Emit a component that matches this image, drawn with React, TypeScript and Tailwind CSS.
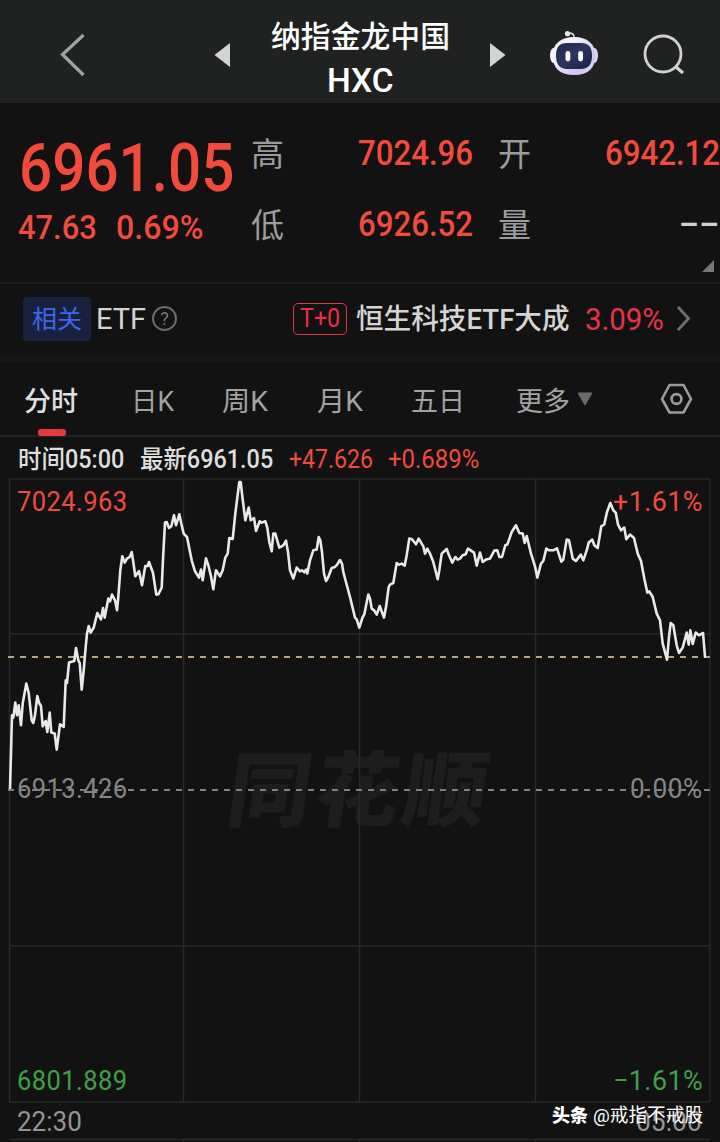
import { useLayoutEffect, useRef, useState, type ReactNode } from "react";

/** Single-line text condensed or widened to fill the width given by its classes. */
function Fit({ className = "", children }: { className?: string; children: ReactNode }) {
  const box = useRef<HTMLSpanElement>(null);
  const text = useRef<HTMLSpanElement>(null);
  const [scale, setScale] = useState(1);
  useLayoutEffect(() => {
    if (box.current && text.current) {
      setScale(box.current.offsetWidth / text.current.offsetWidth);
    }
  }, []);
  return (
    <span ref={box} className={`block shrink-0 whitespace-nowrap ${className}`}>
      <span ref={text} className="inline-block origin-left" style={{ transform: `scaleX(${scale})` }}>
        {children}
      </span>
    </span>
  );
}

// Intraday curve, in chart units (three units per pixel), grouped by horizontal origin.
const segments: { origin: number; points: number[][] }[] = [
  {
    origin: 0,
    points: [
      [30,958],[36,735],[40,742],[46,697],[51,735],[56,705],[63,765],[68,700],[79,640],[86,668],[95,750],[100,758],
      [105,735],[112,677],[117,697],[123,707],[128,768],[137,752],[142,785],[149,727],[154,787],[164,790],[170,838],
      [176,792],[180,762],[191,770],[197,630],[201,638],[207,577],[223,572],[228,533],[235,570],[239,578],[245,658],
      [251,600],[257,530],[261,490],[266,467],[272,487],[281,472],[292,428],[303,447],[309,413],[314,442],[325,385],
      [330,393],[336,373],[345,390],[351,420],[355,380],[361,300],[367,258],[374,277],[381,265],[389,260],[395,245],
      [400,275],[406,318],[417,302],[426,345],[436,287],[443,287],[447,275],[459,308],[469,373],[475,372],[485,352],
      [490,250],[495,157],[500,155],[507,173],[514,168],[522,135],[528,165],[538,132],[544,160],[551,190],[561,200],
      [575,270],[585,303],[597,322],[603,298],[608,330],[618,264],[625,285],[633,318],[640,357],[648,300],[660,318],
      [668,300],[676,262],[683,250],[688,203],[698,206],[706,130],
    ],
  },
  {
    origin: 660,
    points: [
      [58,35],[62,35],[66,70],[76,150],[86,112],[92,150],[102,143],[108,182],[119,153],[125,157],[136,153],[142,172],
      [148,215],[155,243],[160,190],[166,190],[178,232],[190,225],[198,211],[204,245],[210,300],[220,325],[230,292],
      [240,303],[246,300],[253,306],[258,298],[262,310],[270,270],[280,240],[290,238],[296,200],[301,210],[306,245],
      [312,310],[318,332],[325,320],[335,293],[345,290],[352,282],[360,269],[366,280],[370,305],[390,380],[405,442],
      [410,447],[418,472],[428,440],[433,432],[445,373],[450,385],[455,415],[462,420],[470,433],[479,407],[492,442],
      [498,410],[506,350],[510,343],[520,338],[530,278],[537,283],[545,280],[554,286],[560,255],[568,205],[576,207],
      [588,222],[596,205],[610,228],[615,250],[622,235],[630,250],[640,275],[653,327],[658,300],[665,250],[673,243],
      [680,236],[687,255],[697,277],[706,260],[713,268],
    ],
  },
  {
    origin: 1380,
    points: [
      [0,265],[8,255],[17,252],[24,235],[42,247],[50,286],[60,247],[68,275],[78,268],[90,265],[103,241],[112,240],
      [118,260],[126,260],[136,225],[142,223],[155,185],[168,165],[178,188],[188,190],[194,218],[200,197],[213,250],
      [225,288],[232,322],[243,280],[250,272],[259,235],[267,240],[280,240],[291,234],[304,274],[310,268],[320,208],
      [327,210],[338,265],[348,272],[362,253],[370,270],[380,240],[386,217],[397,208],[403,225],[413,233],[424,168],
      [433,162],[441,125],[451,98],[460,120],[467,127],[474,163],[483,180],[493,172],[499,207],[510,193],[522,203],
      [533,250],[543,272],[553,325],[562,367],[568,363],[578,380],[590,430],[600,450],[608,520],[621,568],[627,500],
      [632,458],[640,465],[650,525],[657,548],[668,532],[680,487],[686,523],[691,480],[698,521],[707,487],[717,495],
      [729,488],[735,559],
    ],
  },
];

const curve = segments
  .flatMap((s) => s.points.map(([x, y]) => `${((x + s.origin) / 3).toFixed(1)},${(y / 3 - 7.7).toFixed(1)}`))
  .join(" ");

function Robot() {
  return (
    <svg width="50" height="46" viewBox="0 0 50 46">
      <defs>
        <linearGradient id="shell" x1="0" y1="0" x2="1" y2="1">
          <stop offset="0.3" stopColor="#f4f3fa" />
          <stop offset="0.75" stopColor="#cfc5f4" />
          <stop offset="1" stopColor="#e9e5fb" />
        </linearGradient>
        <linearGradient id="visor" x1="0" y1="0" x2="1" y2="1">
          <stop offset="0" stopColor="#20294f" />
          <stop offset="0.5" stopColor="#2d355c" />
          <stop offset="1" stopColor="#192046" />
        </linearGradient>
      </defs>
      <path d="M19 3.300c4-.8 6.500 1 6.200 5" fill="none" stroke="#d9dcdc" strokeWidth="1.600" />
      <circle cx="18.500" cy="3.700" r="2.600" fill="#e3e6e5" />
      <ellipse cx="4.500" cy="25.500" rx="3.500" ry="7.500" fill="#f1f1f7" />
      <ellipse cx="45.500" cy="25.500" rx="3.500" ry="7.500" fill="#ded7f8" />
      <path d="M25 7C38 7 46.500 14 46.500 25.500 46.500 38 39 45 25 45S3.500 38 3.500 25.500C3.500 14 12 7 25 7Z" fill="url(#shell)" />
      <path d="M18 13h14c7.500 0 11 4 11 12.500S39.500 39 32 39H18C10.500 39 7 34 7 25.500S10.500 13 18 13Z" fill="url(#visor)" />
      <rect x="16.500" y="21" width="4.800" height="10.500" rx="2.400" fill="#fff" />
      <rect x="29.200" y="21" width="4.800" height="10.500" rx="2.400" fill="#fff" />
    </svg>
  );
}

function Header() {
  return (
    <header className="flex h-[103px] bg-[#202221] text-white">
      <svg width="200" height="103" fill="none" className="shrink-0">
        <path d="M83.500 35 62.500 54.500l21 20.500" stroke="#a0a1a1" strokeWidth="3.200" />
      </svg>
      <svg width="60" height="103" className="shrink-0">
        <path d="M14.500 55 30 43v24Z" fill="#d2d4d3" />
      </svg>
      <div className="flex w-[200px] shrink-0 flex-col items-center pt-[15px] font-medium leading-[44px]">
        <Fit className="w-[179px] text-[30px]">纳指金龙中国</Fit>
        <Fit className="w-[67px] text-[33px] leading-[43px]">HXC</Fit>
      </div>
      <svg width="88" height="103" className="shrink-0">
        <path d="M45.500 55 30 43v24Z" fill="#d2d4d3" />
      </svg>
      <div className="w-[92px] shrink-0 pt-[30px] pl-px">
        <Robot />
      </div>
      <svg width="80" height="103" fill="none" stroke="#d0d2d1" strokeWidth="2.800" className="shrink-0">
        <circle cx="23" cy="54" r="18" />
        <path d="m35.500 66.500 7.500 6.500" strokeWidth="3.300" />
      </svg>
    </header>
  );
}

function Quote() {
  return (
    <section className="relative flex h-[181px] border-b-2 border-[#1c1c1c] font-medium text-[#f24b3d]">
      <div className="w-[251px] shrink-0 pl-[18px]">
        <Fit className="mt-[32px] ml-px h-[68px] w-[215px] text-[66px] leading-[68px]">6961.05</Fit>
        <div className="mt-[6px] flex gap-[19px] text-[34px] leading-[36px]">
          <Fit className="w-[79px]">47.63</Fit>
          <Fit className="w-[87px]">0.69%</Fit>
        </div>
      </div>
      <div className="grid h-[141px] grid-cols-[107px_140px_80px_142px] grid-rows-[70px_71px] pt-[16px] text-[35px] leading-[70px]">
        <span className="pt-px text-[33px] font-normal text-[#9c9c9c]">高</span>
        <Fit className="w-[115px]">7024.96</Fit>
        <span className="pt-px text-[33px] font-normal text-[#9c9c9c]">开</span>
        <Fit className="ml-[27px] w-[115px]">6942.12</Fit>
        <span className="pt-[2px] text-[33px] font-normal text-[#9c9c9c]">低</span>
        <Fit className="mt-px w-[115px]">6926.52</Fit>
        <span className="pt-[2px] text-[33px] font-normal text-[#9c9c9c]">量</span>
        <Fit className="ml-[101px] w-[41px] text-[#d0d0d0]">--</Fit>
      </div>
      <svg width="12" height="12" className="absolute right-[6px] bottom-[10px]">
        <path d="M12 0v12H0Z" fill="#777" />
      </svg>
    </section>
  );
}

function Related() {
  return (
    <section className="flex h-[78px] items-center border-b-[9px] border-[#161616] pl-[23px] text-[#d4d4d4]">
      <span className="flex h-[44px] w-[68px] items-center justify-center rounded bg-[#18223f] pt-[2px] text-[25px] text-[#3f65ee]">
        相关
      </span>
      <Fit className="ml-[5px] w-[50px] pt-[2px] text-[29px]">ETF</Fit>
      <span className="ml-[6px] flex size-[25px] items-center justify-center rounded-full border-2 border-[#6c6c6c] text-[18px] leading-none text-[#777]">
        ?
      </span>
      <span className="ml-[116px] flex h-[32px] w-[54px] items-center justify-center rounded-[5px] border border-[#d83b41] text-[#ed2f45]">
        <Fit className="w-[40px] text-[25px]">T+0</Fit>
      </span>
      <Fit className="ml-[9px] w-[214px] pt-[3px] text-[28px] font-medium">恒生科技ETF大成</Fit>
      <Fit className="ml-[15px] w-[79px] text-[32px] text-[#e83448]">3.09%</Fit>
      <svg width="18" height="28" fill="none" className="ml-[11px]">
        <path d="m3 2 10.500 11.500L3 25" stroke="#717171" strokeWidth="2.800" />
      </svg>
    </section>
  );
}

function Tabs() {
  return (
    <nav className="relative flex h-[75px] items-center border-b-2 border-[#242424] pl-[24px] text-[27px] text-[#a2a2a2]">
      <div className="flex pt-[7px]">
        <span className="w-[107px] font-medium text-[#e0e0e0]">分时</span>
        <Fit className="mr-[48px] w-[43px]">日K</Fit>
        <Fit className="mr-[49px] w-[46px]">周K</Fit>
        <Fit className="mr-[48px] w-[46px]">月K</Fit>
        <span className="w-[105px]">五日</span>
        <span>更多</span>
      </div>
      <svg width="16" height="14" className="ml-[7px]">
        <path d="M1 1h14L8 13Z" fill="#6a6a6a" stroke="#6a6a6a" strokeLinejoin="round" />
      </svg>
      <svg width="34" height="34" fill="none" stroke="#9b9b9b" strokeWidth="2.600" strokeLinejoin="round" className="ml-[67px]">
        <path d="M9.500 3h14L31 17l-7.500 13.500h-14L2 17Z" />
        <circle cx="16.500" cy="17" r="4.900" />
      </svg>
      <span className="absolute bottom-[-1px] left-[38px] h-[7px] w-[28px] rounded-[3px] bg-[#e63a3a]" />
    </nav>
  );
}

function Chart() {
  return (
    <section className="relative h-[624px] text-[28px] leading-[36px] tracking-[0.5px]">
      <span className="absolute top-[269px] left-[228px] -skew-x-[8deg] text-[#1d1d1d]">
        <Fit className="w-[264px] text-[82px] leading-[90px] font-black tracking-[4px]">同花顺</Fit>
      </span>
      <svg width="720" height="665" fill="none" className="absolute top-0 left-0">
        <g stroke="#292929" strokeWidth="1.500">
          <path d="M9 1H710M9 156H710M9 468H710M9 624H710M9 661.500H710" />
          <path d="M9.500 1V624M183.500 1V624M359.500 1V624M535.500 1V624M710 1V624M183.500 662V665M359.500 662V665M535.500 662V665" />
        </g>
        <path d="M8 179H710" stroke="#b8a482" strokeWidth="2" strokeDasharray="6 6" />
        <polyline points={curve} stroke="#e9e9e9" strokeWidth="2.600" strokeLinejoin="round" strokeLinecap="round" />
      </svg>
      <Fit className="absolute top-[6px] left-[17px] w-[111px] text-[#f24b3d]">7024.963</Fit>
      <Fit className="absolute top-[6px] left-[613px] w-[90px] text-[#f24b3d]">+1.61%</Fit>
      <Fit className="absolute top-[293px] left-[17px] w-[111px] text-[#858585]">6913.426</Fit>
      <Fit className="absolute top-[293px] left-[630px] w-[73px] text-[#858585]">0.00%</Fit>
      <Fit className="absolute top-[585px] left-[17px] w-[111px] text-[#3fa047]">6801.889</Fit>
      <Fit className="absolute top-[585px] left-[613px] w-[90px] text-[#3fa047]">−1.61%</Fit>
      <svg width="720" height="4" className="absolute top-[310px] left-0">
        <path d="M8 2H710" stroke="#808080" strokeWidth="2" strokeDasharray="6 6" />
      </svg>
    </section>
  );
}

export default function App() {
  return (
    <main className="h-[1142px] w-[720px] overflow-hidden bg-[#121212] font-[Roboto,'Noto_Sans_CJK_SC',sans-serif]">
      <Header />
      <Quote />
      <Related />
      <Tabs />
      <div className="flex h-[41px] items-center pt-[5px] pl-[18px] text-[25px] font-medium text-[#dedede]">
        <Fit className="w-[106px]">时间05:00</Fit>
        <Fit className="ml-[16px] w-[133px]">最新6961.05</Fit>
        <Fit className="ml-[16px] w-[84px] font-normal text-[#f24b3d]">+47.626</Fit>
        <Fit className="ml-[15px] w-[91px] font-normal text-[#f24b3d]">+0.689%</Fit>
      </div>
      <Chart />
      <footer className="relative flex h-[40px] justify-between pt-[2px] pr-[18px] pl-[17px] text-[28px] leading-[36px] text-[#949494]">
        <Fit className="w-[65px]">22:30</Fit>
        <Fit className="w-[66px]">05:00</Fit>
        <span className="absolute top-0 left-[552px] flex items-center gap-[5px] leading-[28px] text-white">
          <Fit className="w-[36px] text-[18px] font-black">头条</Fit>
          <Fit className="w-[110px] text-[19px]">@戒指不戒股</Fit>
        </span>
      </footer>
    </main>
  );
}
